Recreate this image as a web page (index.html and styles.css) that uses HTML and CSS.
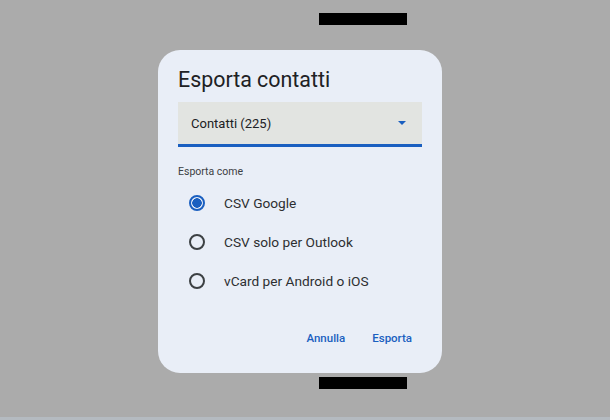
FILE: index.html
```html
<!DOCTYPE html>
<html lang="it">
<head>
    <meta charset="UTF-8">
    <title>Esporta contatti</title>
    <link rel="stylesheet" href="styles.css">
</head>
<body>
    <div id="screen">
        <div class="bar"></div>

        <div id="dialog">
            <h1 class="dialog-title">Esporta contatti</h1>

            <div class="select-field">
                <span>Contatti (225)</span>
                <span class="select-arrow"></span>
            </div>

            <div class="group-label">Esporta come</div>

            <div class="radio-list">
                <label class="radio-row">
                    <span class="radio checked"></span>
                    <span>CSV Google</span>
                </label>
                <label class="radio-row">
                    <span class="radio"></span>
                    <span>CSV solo per Outlook</span>
                </label>
                <label class="radio-row">
                    <span class="radio"></span>
                    <span>vCard per Android o iOS</span>
                </label>
            </div>

            <div class="actions">
                <button class="text-button">Annulla</button>
                <button class="text-button">Esporta</button>
            </div>
        </div>

        <div class="bar"></div>
    </div>
</body>
</html>
```

FILE: styles.css
```css
body {
    margin: 0;
    background-color: #ababab;
    font-family: Roboto, "Noto Sans", Arial, sans-serif;
    color: #202124;
}
#screen {
    height: 417px;
    border-bottom: 3px solid #b4bac0;
    display: flex;
    flex-direction: column;
    align-items: center;
}
.bar {
    width: 88px;
    height: 12px;
    background-color: #000;
    margin: 13px 0 0 116px;
}
#dialog {
    width: 284px;
    height: 323px;
    box-sizing: border-box;
    margin: 25px 10px 4px 0;
    padding: 16px 20px 0 20px;
    background-color: #e9eef7;
    border-radius: 22px;
    display: flex;
    flex-direction: column;
}
#dialog + .bar {
    margin-top: 0;
}
.dialog-title {
    margin: 0;
    padding-top: 1px;
    font-size: 21.4px;
    font-weight: 400;
    line-height: 26px;
}
.select-field {
    margin-top: 9px;
    height: 42px;
    padding: 0 16px 0 13px;
    background-color: #e2e4e1;
    border-bottom: 3px solid #1a5fc0;
    display: flex;
    align-items: center;
    justify-content: space-between;
    font-size: 13px;
}
.select-arrow {
    width: 0;
    height: 0;
    border-left: 4.5px solid transparent;
    border-right: 4.5px solid transparent;
    border-top: 4.5px solid #1a5fc0;
}
.group-label {
    margin-top: 18px;
    font-size: 10.5px;
    line-height: 14px;
    color: #3c4043;
}
.radio-list {
    display: flex;
    flex-direction: column;
    gap: 17px;
    margin-top: 13px;
    padding-left: 11px;
}
.radio-row {
    display: flex;
    align-items: center;
    gap: 19px;
    height: 22px;
    font-size: 13.7px;
    color: #2d2f31;
}
.radio {
    width: 12px;
    height: 12px;
    border: 2px solid #3c4043;
    border-radius: 50%;
    box-sizing: content-box;
}
.radio.checked {
    border-color: #1a5fc0;
    background: radial-gradient(circle, #1a5fc0 0 4.5px, transparent 5px);
}
.actions {
    margin-top: auto;
    margin-bottom: 28px;
    display: flex;
    justify-content: flex-end;
    gap: 27px;
    padding-right: 10px;
}
.text-button {
    border: none;
    background: none;
    padding: 0;
    font-family: inherit;
    font-size: 11.5px;
    font-weight: 500;
    color: #1a5fc0;
    cursor: pointer;
}
```
